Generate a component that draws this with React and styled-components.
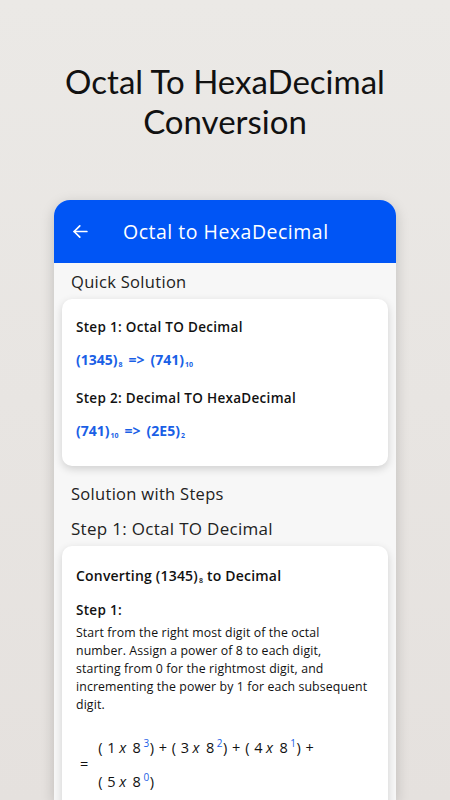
import React from 'react';
import styled, { createGlobalStyle } from 'styled-components';

const GlobalStyle = createGlobalStyle`
  html, body {
    margin: 0;
    padding: 0;
  }
  body {
    background: #e8e5e2;
    font-family: 'Open Sans', 'Noto Sans', sans-serif;
  }
`;

const Page = styled.div`
  width: 450px;
  height: 800px;
  overflow: hidden;
  background: linear-gradient(180deg, #ebe9e6 0%, #e5e1de 100%);
  display: flex;
  flex-direction: column;
  align-items: center;
`;

const Headline = styled.h1`
  margin: 61px 0 0;
  font-family: 'Lato', 'Open Sans', sans-serif;
  font-weight: 400;
  font-size: 33px;
  line-height: 40px;
  color: #111;
  text-align: center;
`;

const Phone = styled.div`
  margin-top: 59px;
  width: 342px;
  flex: 1;
  min-height: 0;
  background: #f7f7f7;
  border-radius: 16px 16px 0 0;
  box-shadow: 0 4px 14px rgba(0, 0, 0, 0.18);
  overflow: hidden;
  display: flex;
  flex-direction: column;
`;

const AppBar = styled.div`
  flex-shrink: 0;
  height: 63px;
  background: #0055f5;
  display: flex;
  align-items: center;
  padding-left: 18px;
  gap: 34px;
  color: #fff;
`;

const AppTitle = styled.span`
  font-size: 19.5px;
  font-weight: 500;
  letter-spacing: 0.5px;
`;

const Body = styled.div`
  flex-shrink: 0;
  padding: 6px 8px 0;
  display: flex;
  flex-direction: column;
`;

const SectionTitle = styled.div`
  font-size: ${p => p.$size || '16.5px'};
  color: #222;
  padding: 0 9px;
  line-height: 22px;
  letter-spacing: 0.3px;
  margin: ${p => p.$m || '0'};
`;

const Card = styled.div`
  background: #fff;
  border-radius: 10px;
  box-shadow: 0 3px 8px rgba(0, 0, 0, 0.16);
  padding: ${p => p.$pad || '18px 14px'};
  display: flex;
  flex-direction: column;
`;

const StepLabel = styled.div`
  font-size: 13.5px;
  font-weight: 600;
  color: #111;
  line-height: 18px;
  letter-spacing: 0.3px;
  margin: ${p => p.$m || '0'};
`;

const Result = styled.div`
  font-size: 14px;
  font-weight: 700;
  color: #1a5fe6;
  line-height: 20px;
  margin: ${p => p.$m || '0'};
`;

const Sub = styled.sub`
  font-size: 7px;
  vertical-align: -2px;
  margin-left: 1px;
`;

const Arrow = styled.span`
  margin: 0 6px;
`;

const Converting = styled.div`
  font-size: 14px;
  font-weight: 600;
  color: #111;
  line-height: 20px;
  letter-spacing: 0.2px;
`;

const Para = styled.p`
  margin: 5px 0 0;
  font-size: 12.3px;
  line-height: 18px;
  letter-spacing: 0.12px;
  color: #111;
  white-space: nowrap;
`;

const Equation = styled.div`
  display: flex;
  align-items: center;
  margin-top: 22px;
  gap: 10px;
  font-size: 14.5px;
  color: #111;
`;

const Eq = styled.span`
  padding-left: 4px;
`;

const EqLines = styled.div`
  display: flex;
  flex-direction: column;
  gap: 13px;
  letter-spacing: 0.5px;
`;

const Pow = styled.sup`
  color: #1a5fe6;
  font-size: 10px;
  vertical-align: 6px;
  margin-left: 2px;
`;

const Times = styled.span`
  font-style: italic;
  margin: 0 6px 0 3px;
`;

function Term({ d, p }) {
  return (
    <span>
      ( {d}<Times>x</Times>8<Pow>{p}</Pow>)
    </span>
  );
}

export default function App() {
  return (
    <>
      <GlobalStyle />
      <Page>
        <Headline>
          Octal To HexaDecimal
          <br />
          Conversion
        </Headline>
        <Phone>
          <AppBar>
            <svg width="17" height="17" viewBox="0 0 24 24" fill="none" stroke="#fff" strokeWidth="2.4" strokeLinecap="round" strokeLinejoin="round">
              <path d="M21 12H3" />
              <path d="M11 4l-8 8 8 8" />
            </svg>
            <AppTitle>Octal to HexaDecimal</AppTitle>
          </AppBar>
          <Body>
            <SectionTitle $m="2px 0 6px">Quick Solution</SectionTitle>
            <Card $pad="19px 14px 20px">
              <StepLabel>Step 1: Octal TO Decimal</StepLabel>
              <Result $m="14px 0 0">
                (1345)<Sub>8</Sub>
                <Arrow>=&gt;</Arrow>(741)<Sub>10</Sub>
              </Result>
              <StepLabel $m="14px 0 0">Step 2: Decimal TO HexaDecimal</StepLabel>
              <Result $m="14px 0 0">
                (741)<Sub>10</Sub>
                <Arrow>=&gt;</Arrow>(2E5)<Sub>2</Sub>
              </Result>
            </Card>
            <SectionTitle $m="17px 0 0">Solution with Steps</SectionTitle>
            <SectionTitle $size="17px" $m="13px 0 6px">Step 1: Octal TO Decimal</SectionTitle>
            <Card $pad="20px 14px 30px">
              <Converting>
                Converting (1345)<Sub>8</Sub> to Decimal
              </Converting>
              <StepLabel $m="10px 0 0">Step 1:</StepLabel>
              <Para>
                Start from the right most digit of the octal
                <br />
                number. Assign a power of 8 to each digit,
                <br />
                starting from 0 for the rightmost digit, and
                <br />
                incrementing the power by 1 for each subsequent
                <br />
                digit.
              </Para>
              <Equation>
                <Eq>=</Eq>
                <EqLines>
                  <div>
                    <Term d="1" p="3" /> + <Term d="3" p="2" /> + <Term d="4" p="1" /> +
                  </div>
                  <div>
                    <Term d="5" p="0" />
                  </div>
                </EqLines>
              </Equation>
            </Card>
          </Body>
        </Phone>
      </Page>
    </>
  );
}
